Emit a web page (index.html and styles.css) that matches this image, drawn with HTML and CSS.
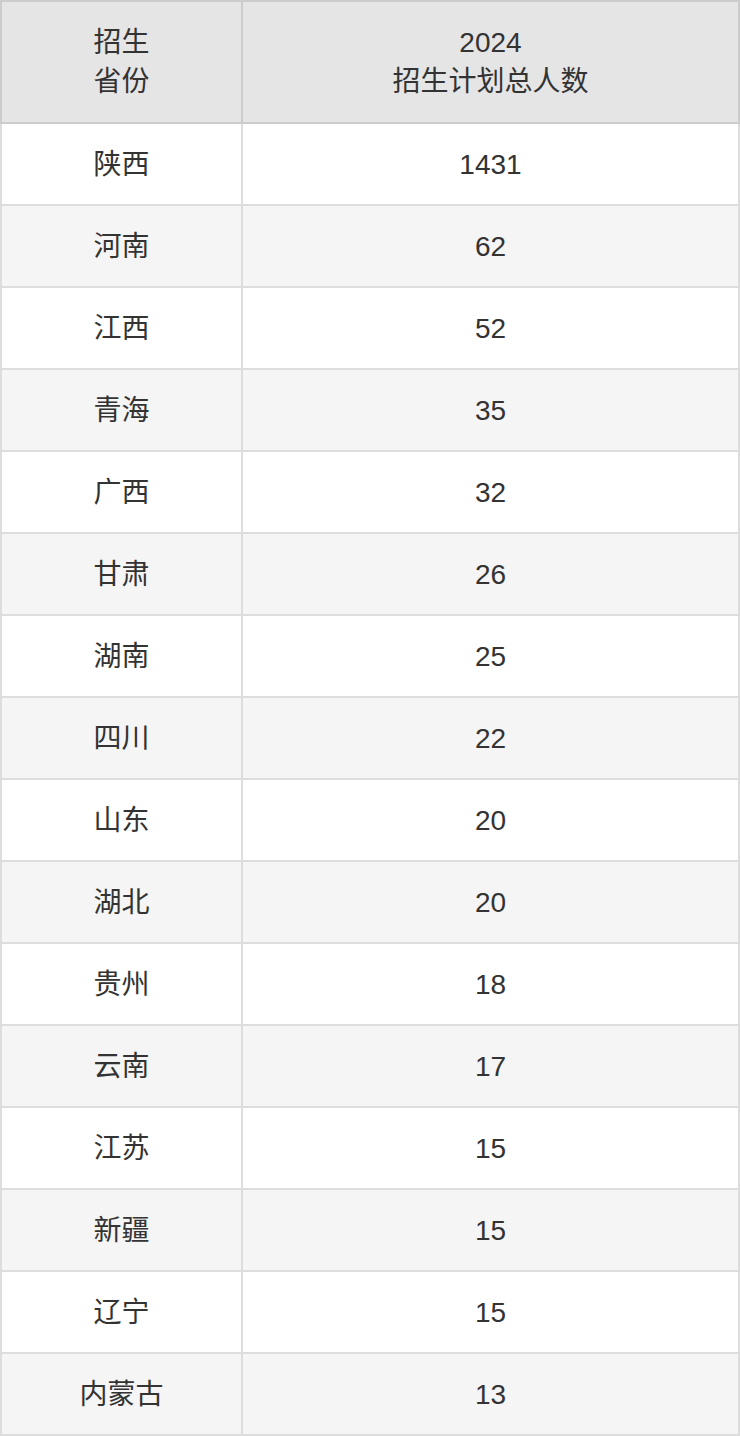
FILE: index.html
```html
<!DOCTYPE html>
<html lang="zh-CN">
<head>
<meta charset="utf-8">
<title>招生计划</title>
<link rel="stylesheet" href="styles.css">
</head>
<body>
<table class="plan">
  <thead>
    <tr>
      <th class="col-prov">招生<br>省份</th>
      <th class="col-num">2024<br>招生计划总人数</th>
    </tr>
  </thead>
  <tbody>
    <tr><td class="col-prov">陕西</td><td class="col-num">1431</td></tr>
    <tr><td class="col-prov">河南</td><td class="col-num">62</td></tr>
    <tr><td class="col-prov">江西</td><td class="col-num">52</td></tr>
    <tr><td class="col-prov">青海</td><td class="col-num">35</td></tr>
    <tr><td class="col-prov">广西</td><td class="col-num">32</td></tr>
    <tr><td class="col-prov">甘肃</td><td class="col-num">26</td></tr>
    <tr><td class="col-prov">湖南</td><td class="col-num">25</td></tr>
    <tr><td class="col-prov">四川</td><td class="col-num">22</td></tr>
    <tr><td class="col-prov">山东</td><td class="col-num">20</td></tr>
    <tr><td class="col-prov">湖北</td><td class="col-num">20</td></tr>
    <tr><td class="col-prov">贵州</td><td class="col-num">18</td></tr>
    <tr><td class="col-prov">云南</td><td class="col-num">17</td></tr>
    <tr><td class="col-prov">江苏</td><td class="col-num">15</td></tr>
    <tr><td class="col-prov">新疆</td><td class="col-num">15</td></tr>
    <tr><td class="col-prov">辽宁</td><td class="col-num">15</td></tr>
    <tr><td class="col-prov">内蒙古</td><td class="col-num">13</td></tr>
  </tbody>
</table>
</body>
</html>
```
FILE: styles.css
```css
html, body {
  margin: 0;
  padding: 0;
  background: #ffffff;
}

.plan {
  width: 740px;
  border-collapse: separate;
  border-spacing: 0;
  table-layout: fixed;
  font-family: "Liberation Sans", "Noto Sans CJK SC", sans-serif;
  font-size: 28px;
  line-height: 39px;
  color: #333333;
}

.plan th,
.plan td {
  box-sizing: border-box;
  padding: 0;
  text-align: center;
  vertical-align: middle;
  font-weight: normal;
}

.plan th {
  height: 124px;
  background: #e5e5e5;
  border-top: 2px solid #cccccc;
  border-right: 2px solid #cccccc;
  border-bottom: 2px solid #cccccc;
}

.plan th.col-prov {
  border-left: 2px solid #cccccc;
}

.plan td {
  height: 82px;
  border-right: 2px solid #dddddd;
  border-bottom: 2px solid #dddddd;
}

.plan td.col-prov {
  border-left: 2px solid #dddddd;
}

.plan .col-prov {
  width: 243px;
}

.plan .col-num {
  width: 497px;
}

.plan tbody tr:nth-child(even) td {
  background: #f5f5f5;
}
```
